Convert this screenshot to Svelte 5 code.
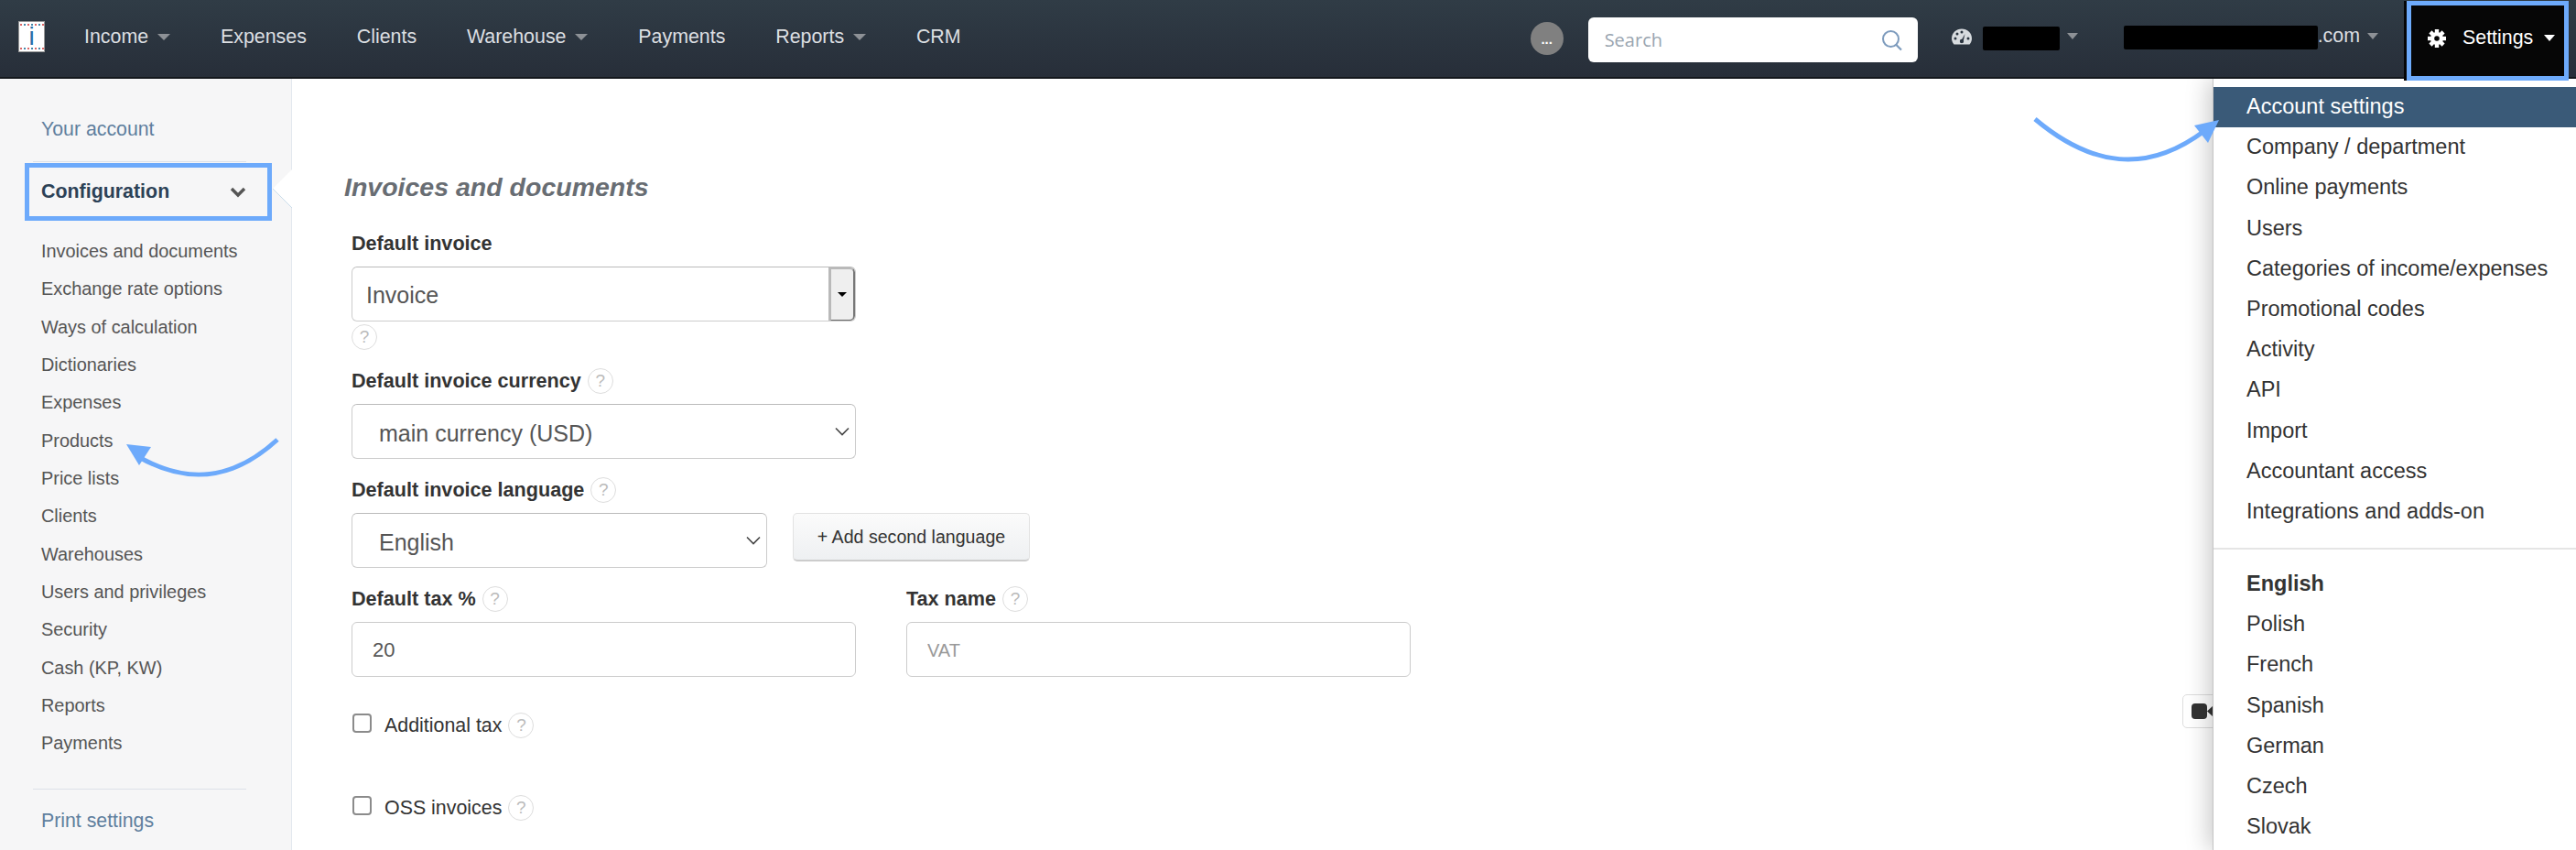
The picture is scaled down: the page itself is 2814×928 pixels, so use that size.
<script>
  const navItems = [
    { label: 'Income', caret: true },
    { label: 'Expenses' },
    { label: 'Clients' },
    { label: 'Warehouse', caret: true },
    { label: 'Payments' },
    { label: 'Reports', caret: true },
    { label: 'CRM' },
  ]

  const configLinks = [
    'Invoices and documents', 'Exchange rate options', 'Ways of calculation', 'Dictionaries',
    'Expenses', 'Products', 'Price lists', 'Clients', 'Warehouses', 'Users and privileges',
    'Security', 'Cash (KP, KW)', 'Reports', 'Payments',
  ]

  const settingsLinks = [
    'Company / department', 'Online payments', 'Users', 'Categories of income/expenses',
    'Promotional codes', 'Activity', 'API', 'Import', 'Accountant access', 'Integrations and adds-on',
  ]

  const languages = ['Polish', 'French', 'Spanish', 'German', 'Czech', 'Slovak']

  const cogTeeth = [0, 45, 90, 135, 180, 225, 270, 315]
</script>

{#snippet help()}
  <span class="help">?</span>
{/snippet}

{#snippet chevron()}
  <svg class="chevron" width="16" height="10" viewBox="0 0 16 10">
    <path d="M1 1.5 L8 8.5 L15 1.5" fill="none" stroke="#444" stroke-width="1.6" />
  </svg>
{/snippet}

<div class="page">
  <header class="navbar">
    <div class="logo"><span>i</span></div>

    <nav class="nav-main">
      {#each navItems as item}
        <span class="nav-item">{item.label}{#if item.caret}<i class="caret"></i>{/if}</span>
      {/each}
    </nav>

    <div class="nav-right">
      <span class="dots">...</span>
      <div class="search">
        <input type="text" placeholder="Search" />
        <svg width="24" height="24" viewBox="0 0 24 24">
          <circle cx="10.5" cy="10.5" r="8.5" fill="none" stroke="#7d9bbd" stroke-width="2" />
          <path d="M16.5 17 L22 22.5" stroke="#7d9bbd" stroke-width="2.2" />
        </svg>
      </div>
      <svg class="gauge" width="22" height="18" viewBox="0 0 22 18">
        <path d="M2.5 17.5 C0.5 15 0 13 0 11 C0 5 5 0.5 11 0.5 C17 0.5 22 5 22 11 C22 13 21.5 15 19.5 17.5 Z" fill="#d8dcdf" />
        <circle cx="4" cy="11" r="1.5" fill="#2b3540" />
        <circle cx="6" cy="6" r="1.5" fill="#2b3540" />
        <circle cx="11" cy="4" r="1.5" fill="#2b3540" />
        <circle cx="18" cy="11" r="1.5" fill="#2b3540" />
        <path d="M10 14 L14.5 6 L12.6 14.6 Z" fill="#2b3540" />
        <circle cx="11" cy="14" r="2.2" fill="#2b3540" />
      </svg>
      <span class="redacted short"></span>
      <i class="caret small"></i>
      <span class="account"><span class="redacted long"></span>.com</span>
      <i class="caret small"></i>
      <div class="settings">
        <svg width="20" height="20" viewBox="-10 -10 20 20">
          {#each cogTeeth as angle}
            <rect x="-2.2" y="-10" width="4.4" height="5" fill="#fff" transform="rotate({angle})" />
          {/each}
          <circle r="7" fill="#fff" />
          <circle r="2.8" fill="#060606" />
        </svg>
        <span>Settings</span>
        <i class="caret white"></i>
      </div>
    </div>
  </header>

  <div class="body">
    <aside class="sidebar">
      <a class="top-link">Your account</a>
      <div class="rule"></div>
      <div class="config">
        <strong>Configuration</strong>
        <svg width="18" height="12" viewBox="0 0 18 12">
          <path d="M2 2 L9 9 L16 2" fill="none" stroke="#555" stroke-width="3.4" />
        </svg>
      </div>
      <ul class="links">
        {#each configLinks as link}
          <li>{link}</li>
        {/each}
      </ul>
      <div class="rule bottom"></div>
      <a class="top-link print">Print settings</a>
      <svg class="notch" width="22" height="44" viewBox="0 0 22 44">
        <path d="M22 0 L1 21 L22 42 Z" fill="#fff" />
        <path d="M1 21 L22 42" stroke="#c9dcea" stroke-width="1" fill="none" />
      </svg>
    </aside>

    <main class="content">
      <h2>Invoices and documents</h2>

      <div class="field first">
        <div class="label">Default invoice</div>
        <div class="control wide select-old">
          <span>Invoice</span>
          <div class="select-btn"><i class="caret black"></i></div>
        </div>
        <div class="help-below">{@render help()}</div>
      </div>

      <div class="field">
        <div class="label">Default invoice currency {@render help()}</div>
        <div class="select-wrap wide">
          <select><option>main currency (USD)</option></select>
          {@render chevron()}
        </div>
      </div>

      <div class="field">
        <div class="label">Default invoice language {@render help()}</div>
        <div class="lang-row">
          <div class="select-wrap lang">
            <select><option>English</option></select>
            {@render chevron()}
          </div>
          <button>+ Add second language</button>
        </div>
      </div>

      <div class="field tax-row">
        <div>
          <div class="label">Default tax % {@render help()}</div>
          <input class="control wide" type="text" value="20" />
        </div>
        <div>
          <div class="label">Tax name {@render help()}</div>
          <input class="control wide" type="text" placeholder="VAT" />
        </div>
      </div>

      <label class="check first-check"><input type="checkbox" /> Additional tax {@render help()}</label>
      <label class="check second-check"><input type="checkbox" /> OSS invoices {@render help()}</label>
    </main>
  </div>

  <div class="video-tab">
    <svg width="24" height="17" viewBox="0 0 24 17">
      <rect x="0" y="0" width="17" height="17" rx="4" fill="#333" />
      <path d="M17 8.5 L24 2 L24 15 Z" fill="#333" />
    </svg>
  </div>

  <div class="menu">
    <div class="menu-item active">Account settings</div>
    {#each settingsLinks as link}
      <div class="menu-item">{link}</div>
    {/each}
    <div class="menu-divider"></div>
    <div class="menu-item current">English</div>
    {#each languages as lang}
      <div class="menu-item">{lang}</div>
    {/each}
  </div>

  <!-- annotation arrows from the original screenshot -->
  <svg class="arrows" width="2814" height="928" viewBox="0 0 2814 928">
    <path d="M2223 130 C2285 182 2345 190 2408 143" fill="none" stroke="#6daafb" stroke-width="5" />
    <path d="M2397 137 L2424 131 L2412 156 Z" fill="#6daafb" />
    <path d="M303 480 C255 524 205 530 150 498" fill="none" stroke="#6daafb" stroke-width="5" />
    <path d="M138 485 L165 488 L152 508 Z" fill="#6daafb" />
  </svg>
</div>

<style>
  :global(body) {
    margin: 0;
    background: #fff;
  }
  .page {
    position: relative;
    width: 2814px;
    height: 928px;
    overflow: hidden;
    font-family: "Liberation Sans", Arial, sans-serif;
    color: #333;
  }

  /* ==================== navbar ==================== */
  .navbar {
    display: flex;
    align-items: center;
    box-sizing: border-box;
    height: 86px;
    padding-left: 20px;
    background: linear-gradient(#303c46, #272e39);
    border-bottom: 2px solid #14181d;
    font-size: 21.4px;
    color: #dcdfe2;
  }
  .logo {
    position: relative;
    box-sizing: border-box;
    width: 29px;
    height: 34px;
    margin-top: -4px;
    border: 1px solid #999;
    background:
      repeating-linear-gradient(90deg, #d66 0 2px, #fff 2px 4px, #48a 4px 6px, #fff 6px 8px) top 2px left 1px / 100% 2px no-repeat,
      repeating-linear-gradient(90deg, #d66 0 2px, #fff 2px 4px, #48a 4px 6px, #fff 6px 8px) bottom 2px left 1px / 100% 2px no-repeat,
      #fff;
    text-align: center;
  }
  .logo span {
    font: 28px/32px "Liberation Sans", sans-serif;
    color: #2a6ea8;
  }
  .nav-main {
    display: flex;
    margin-left: 43px;
    margin-top: -3px;
    gap: 54.8px;
  }
  .nav-item {
    display: inline-flex;
    align-items: center;
    white-space: nowrap;
  }
  .caret {
    display: inline-block;
    width: 0;
    height: 0;
    margin-left: 10px;
    border-left: 7px solid transparent;
    border-right: 7px solid transparent;
    border-top: 7px solid #8d9196;
  }
  .caret.small {
    margin-left: 8px;
    border-left-width: 6px;
    border-right-width: 6px;
  }
  .caret.white {
    margin-left: 0;
    border-top-color: #fff;
    border-left-width: 6px;
    border-right-width: 6px;
  }
  .caret.black {
    margin: 0;
    border-top-color: #000;
    border-left-width: 5px;
    border-right-width: 5px;
    border-top-width: 5px;
  }
  .nav-right {
    display: flex;
    align-items: center;
    margin-left: auto;
    margin-right: 8px;
    height: 100%;
  }
  .dots {
    width: 36px;
    height: 36px;
    margin-top: -1px;
    border-radius: 50%;
    background: #808080;
    color: #fff;
    font-size: 15px;
    font-weight: bold;
    line-height: 38px;
    text-align: center;
  }
  .search {
    display: flex;
    align-items: center;
    box-sizing: border-box;
    width: 360px;
    height: 49px;
    margin-left: 27px;
    margin-top: 3px;
    padding: 0 16px 0 18px;
    border-radius: 6px;
    background: #fff;
  }
  .search input {
    flex: 1;
    min-width: 0;
    border: 0;
    padding: 0;
    outline: 0;
    background: none;
    font: 20px "Open Sans", sans-serif;
  }
  .search input::placeholder {
    color: #9aa5b0;
    opacity: 1;
  }
  .gauge {
    margin-left: 37px;
    margin-top: -4px;
  }
  .redacted {
    display: inline-block;
    height: 26px;
    background: #000;
    border-radius: 2px;
  }
  .redacted.short {
    width: 84px;
    margin-left: 12px;
    margin-top: 0;
  }
  .redacted.long {
    width: 212px;
    vertical-align: middle;
  }
  .account {
    margin-left: 50px;
    white-space: nowrap;
    margin-top: -3px;
  }
  .nav-right > .caret {
    margin-top: -6px;
  }
  .settings {
    display: flex;
    align-items: center;
    align-self: flex-start;
    box-sizing: border-box;
    position: relative;
    z-index: 3;
    width: 177px;
    height: 87px;
    margin-left: 31px;
    margin-top: 1px;
    padding: 0 0 6px 18px;
    border: 5px solid #6daafb;
    background: #060606;
    box-shadow: -3px 0 0 #060606;
    color: #fff;
  }
  .settings span {
    margin: 0 12px 0 18px;
  }

  /* ==================== sidebar ==================== */
  .body {
    display: flex;
    height: 842px;
  }
  .sidebar {
    position: relative;
    box-sizing: border-box;
    flex: 0 0 319px;
    padding-top: 41px;
    background: #f6f6f7;
    border-right: 1px solid #e3e8ee;
  }
  .top-link {
    display: block;
    margin-left: 45px;
    font-size: 21.3px;
    line-height: 28px;
    color: #5f7f9e;
  }
  .rule {
    height: 1px;
    margin: 21px 49px 0 36px;
    background: #dde1e8;
  }
  .rule.bottom {
    margin-top: 28px;
    margin-bottom: 20px;
  }
  .config {
    display: flex;
    align-items: center;
    justify-content: space-between;
    box-sizing: border-box;
    width: 270px;
    height: 63px;
    margin: 1px 0 0 27px;
    padding: 0 23px 0 13px;
    border: 5px solid #6daafb;
    font-size: 21.4px;
    color: #2c4156;
  }
  .links {
    margin: 13px 0 0;
    padding: 0 0 0 45px;
    list-style: none;
    font-size: 19.9px;
    line-height: 41.33px;
    color: #555;
  }
  .print {
    color: #5f7f9e;
  }
  .notch {
    position: absolute;
    top: 99px;
    right: -1px;
  }

  /* ==================== form ==================== */
  .content {
    flex: 1;
    padding: 101px 0 0 65px;
  }
  h2 {
    margin: 0 0 31px -8px;
    font-size: 28.5px;
    font-style: italic;
    font-weight: bold;
    line-height: 34px;
    color: #686d73;
  }
  .field {
    margin-top: 20px;
  }
  .field.first {
    margin-top: 0;
  }
  .label {
    display: flex;
    align-items: center;
    gap: 7px;
    height: 28px;
    margin-bottom: 11px;
    font-size: 21.6px;
    font-weight: bold;
    white-space: nowrap;
  }
  .help {
    display: inline-block;
    box-sizing: border-box;
    width: 28px;
    height: 28px;
    border: 1px solid #ddd;
    border-radius: 50%;
    background: #fff;
    color: #bbb;
    font-size: 19px;
    font-weight: normal;
    line-height: 26px;
    text-align: center;
  }
  .help-below {
    height: 28px;
    margin-top: 3px;
  }
  .control {
    box-sizing: border-box;
    height: 60px;
    padding: 2px 0 0 22px;
    border: 1px solid #ccc;
    border-radius: 6px;
    background: #fff;
    font: 25px "Liberation Sans", Arial, sans-serif;
    color: #555;
    outline: 0;
  }
  input.control {
    font-size: 22px;
    display: block;
  }
  input.control::placeholder {
    color: #999;
    font-size: 20px;
    opacity: 1;
  }
  .wide {
    width: 551px;
  }
  .select-old {
    display: flex;
    align-items: center;
    justify-content: space-between;
    padding: 0 0 0 15px;
    border-top-color: #bbb;
    overflow: hidden;
  }
  .select-old span {
    padding-top: 3px;
  }
  .select-btn {
    display: flex;
    align-items: center;
    justify-content: center;
    box-sizing: border-box;
    width: 29px;
    height: 60px;
    background: #efefef;
    border-style: solid;
    border-color: #b9b9b9 #777 #666 #b9b9b9;
    border-width: 3px 2px 2px 3px;
    border-radius: 0 6px 6px 0;
  }
  .select-wrap {
    position: relative;
    height: 60px;
  }
  .select-wrap select {
    box-sizing: border-box;
    width: 100%;
    height: 60px;
    padding: 3px 0 0 29px;
    border: 1px solid #ccc;
    border-top-color: #bbb;
    border-radius: 6px;
    background: #fff;
    appearance: none;
    font: 25px "Liberation Sans", Arial, sans-serif;
    color: #555;
    outline: 0;
  }
  .chevron {
    position: absolute;
    top: 25px;
    right: 7px;
    pointer-events: none;
  }
  .lang-row {
    display: flex;
    gap: 28px;
  }
  .lang {
    width: 454px;
  }
  button {
    box-sizing: border-box;
    width: 259px;
    height: 53px;
    padding: 0;
    border: 1px solid #e2e2e2;
    border-bottom: 2px solid #ccc;
    border-radius: 5px;
    background: linear-gradient(#fbfbfb, #eef0f2);
    font: 19.6px "Liberation Sans", Arial, sans-serif;
    color: #333;
  }
  .tax-row {
    display: flex;
    gap: 55px;
  }
  .check {
    display: flex;
    align-items: center;
    gap: 7px;
    height: 28px;
    font-size: 21.4px;
  }
  .check input {
    box-sizing: border-box;
    width: 21px;
    height: 21px;
    margin: -6px 7px 0 1px;
    border: 2px solid #8b8b8b;
    border-radius: 4px;
    background: #fff;
    appearance: none;
  }
  .first-check {
    margin-top: 39px;
  }
  .second-check {
    margin-top: 62px;
  }

  /* ==================== dropdown ==================== */
  .video-tab {
    position: absolute;
    top: 758px;
    left: 2384px;
    box-sizing: border-box;
    width: 40px;
    height: 37px;
    padding: 9px 0 0 9px;
    border: 1px solid #ddd;
    border-radius: 5px;
    background: #fff;
  }
  .menu {
    position: absolute;
    top: 86px;
    left: 2417px;
    right: 0;
    bottom: 0;
    z-index: 2;
    padding-top: 9px;
    border-left: 1px solid #c4c4c4;
    background: #fff;
    box-shadow: -4px 0 24px rgba(0, 0, 0, 0.22);
    clip-path: inset(0 0 0 -40px);
    font-size: 23.5px;
    color: #333;
  }
  .menu-item {
    height: 44.2px;
    padding-left: 36px;
    line-height: 43.4px;
    white-space: nowrap;
  }
  .menu-item.active {
    background: #3a5a78;
    color: #fff;
  }
  .menu-item.current {
    font-weight: bold;
  }
  .menu-divider {
    height: 2px;
    margin: 17px 0 16px;
    background: #e5e5e5;
  }
  .arrows {
    position: absolute;
    top: 0;
    left: 0;
    z-index: 4;
    pointer-events: none;
  }
</style>
